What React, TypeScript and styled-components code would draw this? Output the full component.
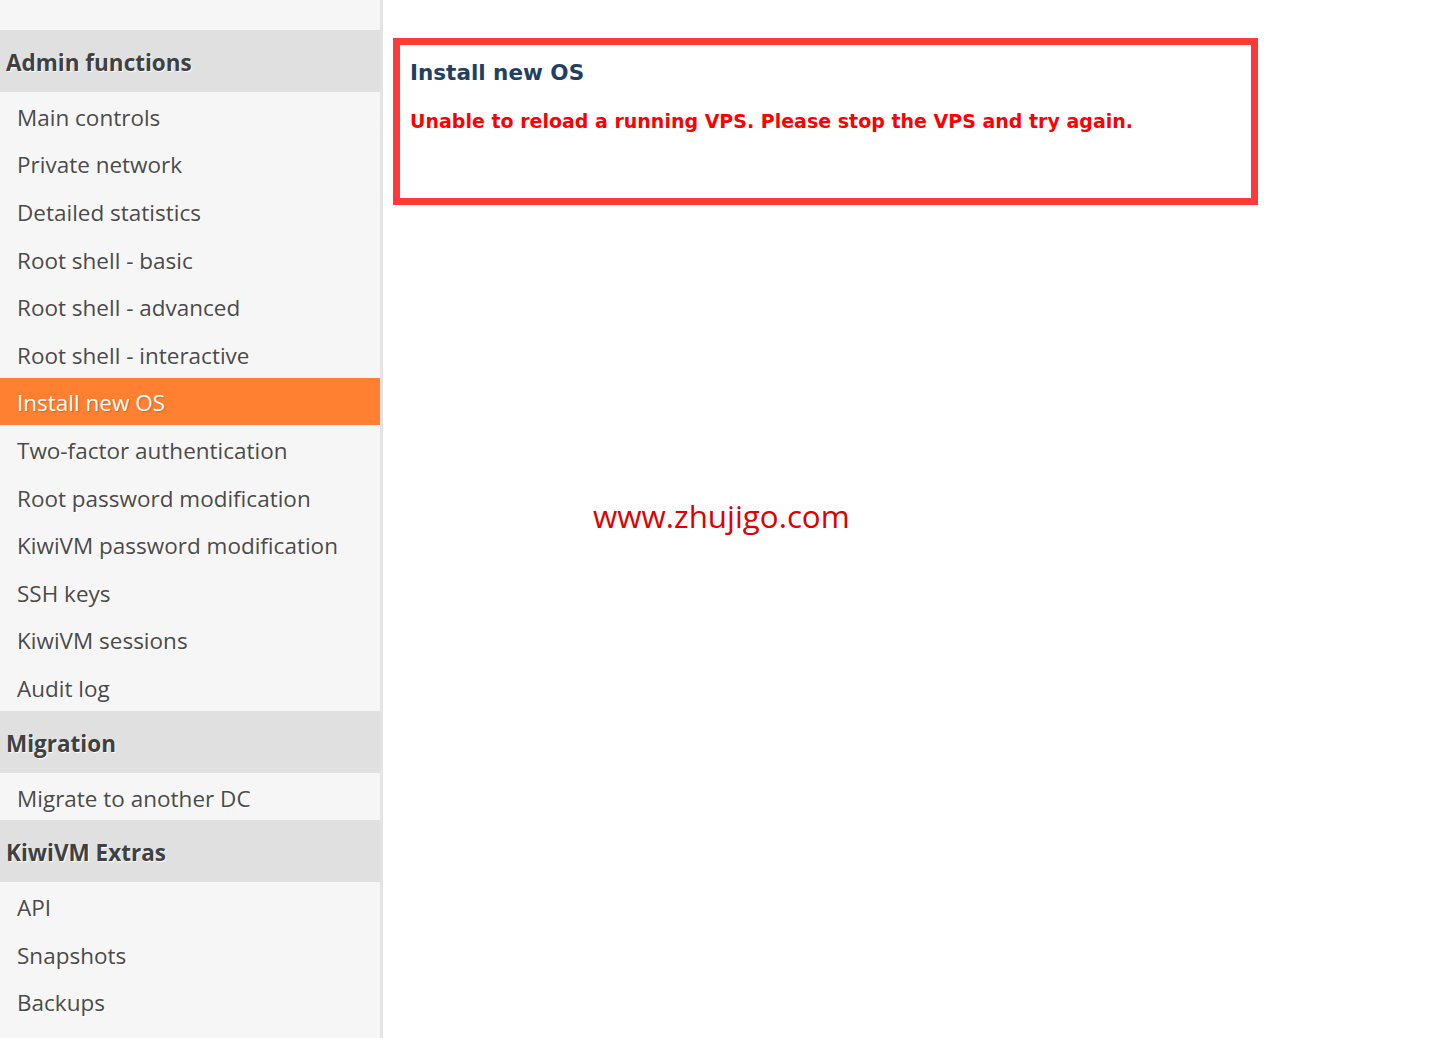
import React from "react";
import styled, { createGlobalStyle } from "styled-components";

const Global = createGlobalStyle`
  html, body { margin: 0; padding: 0; background: #fff; }
  body { font-family: "Open Sans", "Noto Sans", sans-serif; }
`;

const Page = styled.div`
  display: flex;
  min-height: 1038px;
  width: 1440px;
`;

const Sidebar = styled.nav`
  width: 380px;
  flex: none;
  background: #f6f6f6;
  border-right: 3px solid #e4e4e4;
  padding-top: 30px;
  box-sizing: content-box;
`;

const SectionHeader = styled.div`
  height: 62px;
  display: flex;
  align-items: center;
  padding-left: 6px;
  padding-top: 3px;
  box-sizing: border-box;
  background: #e0e0e0;
  color: #404040;
  font-weight: 700;
  font-size: 22.5px;
  text-shadow: 1px 1px 1px #fff;
`;

const Item = styled.div<{ $active?: boolean }>`
  height: 47.6px;
  display: flex;
  align-items: center;
  padding-left: 17px;
  padding-top: 3px;
  box-sizing: border-box;
  font-size: 22.5px;
  color: ${(p) => (p.$active ? "#fff" : "#4a4a4a")};
  background: ${(p) => (p.$active ? "#ff8030" : "transparent")};
  text-shadow: ${(p) => (p.$active ? "1px 1px 1px rgba(120,50,0,0.35)" : "1px 1px 0 #fff")};
`;

const Main = styled.main`
  flex: 1;
  padding: 38px 0 0 10px;
  display: flex;
  flex-direction: column;
  align-items: flex-start;
`;

const Notice = styled.section`
  width: 831px;
  height: 138px;
  border: 7px solid #fd3a3a;
  padding: 15px 10px 0;
  box-sizing: content-box;
  font-family: "DejaVu Sans", Verdana, sans-serif;
`;

const Title = styled.h2`
  margin: 0;
  font-size: 21.5px;
  font-weight: 700;
  color: #1f4060;
`;

const Error = styled.p`
  margin: 25px 0 0;
  font-size: 19px;
  font-weight: 700;
  color: #ff0000;
`;

const Watermark = styled.div`
  margin: 290px 0 0 200px;
  font-size: 31.3px;
  color: #e00000;
  font-family: "Open Sans", sans-serif;
`;

const admin = [
  "Main controls",
  "Private network",
  "Detailed statistics",
  "Root shell - basic",
  "Root shell - advanced",
  "Root shell - interactive",
  "Install new OS",
  "Two-factor authentication",
  "Root password modification",
  "KiwiVM password modification",
  "SSH keys",
  "KiwiVM sessions",
  "Audit log",
];

export default function App() {
  return (
    <>
      <Global />
      <Page>
        <Sidebar>
          <SectionHeader>Admin functions</SectionHeader>
          {admin.map((t) => (
            <Item key={t} $active={t === "Install new OS"}>
              {t}
            </Item>
          ))}
          <SectionHeader>Migration</SectionHeader>
          <Item>Migrate to another DC</Item>
          <SectionHeader>KiwiVM Extras</SectionHeader>
          <Item>API</Item>
          <Item>Snapshots</Item>
          <Item>Backups</Item>
        </Sidebar>
        <Main>
          <Notice>
            <Title>Install new OS</Title>
            <Error>Unable to reload a running VPS. Please stop the VPS and try again.</Error>
          </Notice>
          <Watermark>www.zhujigo.com</Watermark>
        </Main>
      </Page>
    </>
  );
}
